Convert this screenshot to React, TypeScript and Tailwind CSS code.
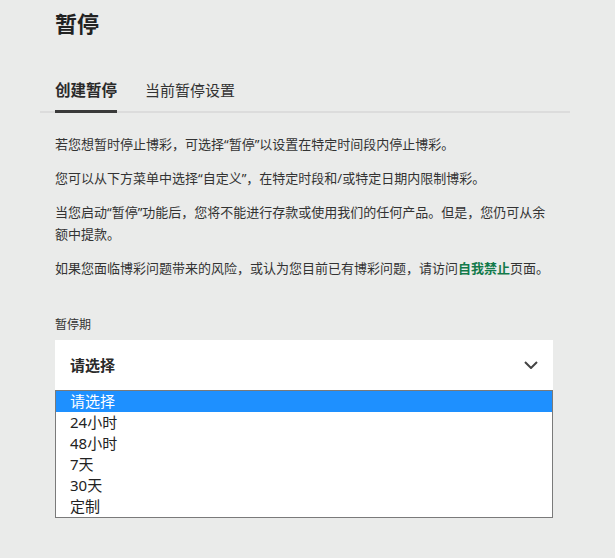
import React, { useState } from 'react'

const options = ['请选择', '24小时', '48小时', '7天', '30天', '定制']

export default function App() {
  const [tab, setTab] = useState(0)
  const [active, setActive] = useState(0)

  return (
    <div className="min-h-screen bg-[#eaebea] text-[#333333] font-['Noto_Sans','Noto_Sans_CJK_SC',sans-serif]">
      <div className="ml-[40px] w-[530px]">
        {/* Title */}
        <h1 className="px-[15px] pt-[8px] text-[22px] font-bold leading-[30px] text-[#222222]">暂停</h1>

        {/* Tabs */}
        <div className="mt-[41px] flex gap-[28px] border-b-2 border-[#dcdcdc] px-[15px]">
          {['创建暂停', '当前暂停设置'].map((t, i) => (
            <button
              key={t}
              onClick={() => setTab(i)}
              className={
                i === tab
                  ? '-mb-[2px] border-b-[3px] border-[#3a3a3a] pb-[9px] text-[15.5px] font-bold leading-[22px] text-[#2a2a2a]'
                  : '-mb-[2px] border-b-[3px] border-transparent pb-[9px] text-[15px] leading-[22px] text-[#333333]'
              }
            >
              {t}
            </button>
          ))}
        </div>

        {/* Body */}
        <div className="pl-[15px] pr-[17px]">
          <div className="mt-[20px] space-y-[12px] text-[13px] leading-[22px]">
            <p>若您想暂时停止博彩，可选择“暂停”以设置在特定时间段内停止博彩。</p>
            <p>您可以从下方菜单中选择“自定义”，在特定时段和/或特定日期内限制博彩。</p>
            <p>当您启动“暂停”功能后，您将不能进行存款或使用我们的任何产品。但是，您仍可从余额中提款。</p>
            <p>
              如果您面临博彩问题带来的风险，或认为您目前已有博彩问题，请访问
              <a href="#" className="font-bold text-[#137a4b]">自我禁止</a>
              页面。
            </p>
          </div>

          <label className="mt-[38px] block text-[12px] leading-[16px] text-[#333333]">暂停期</label>

          {/* Select */}
          <div className="mt-[7px] flex h-[50px] items-center justify-between bg-white pl-[15px] pr-[15px]">
            <span className="text-[15px] font-bold text-[#2a2a2a]">{options[0]}</span>
            <svg width="14" height="8" viewBox="0 0 14 8" fill="none">
              <path d="M1 1l6 6 6-6" stroke="#444444" strokeWidth="2" />
            </svg>
          </div>

          {/* Open dropdown list */}
          <ul className="border border-[#7a7a7a] bg-white">
            {options.map((o, i) => (
              <li
                key={o}
                onMouseEnter={() => setActive(i)}
                className={
                  i === active
                    ? 'bg-[#1e90ff] pl-[14px] text-[15px] leading-[21px] text-white'
                    : 'pl-[14px] text-[15px] leading-[21px] text-[#222222]'
                }
              >
                {o}
              </li>
            ))}
          </ul>
        </div>
      </div>
    </div>
  )
}
